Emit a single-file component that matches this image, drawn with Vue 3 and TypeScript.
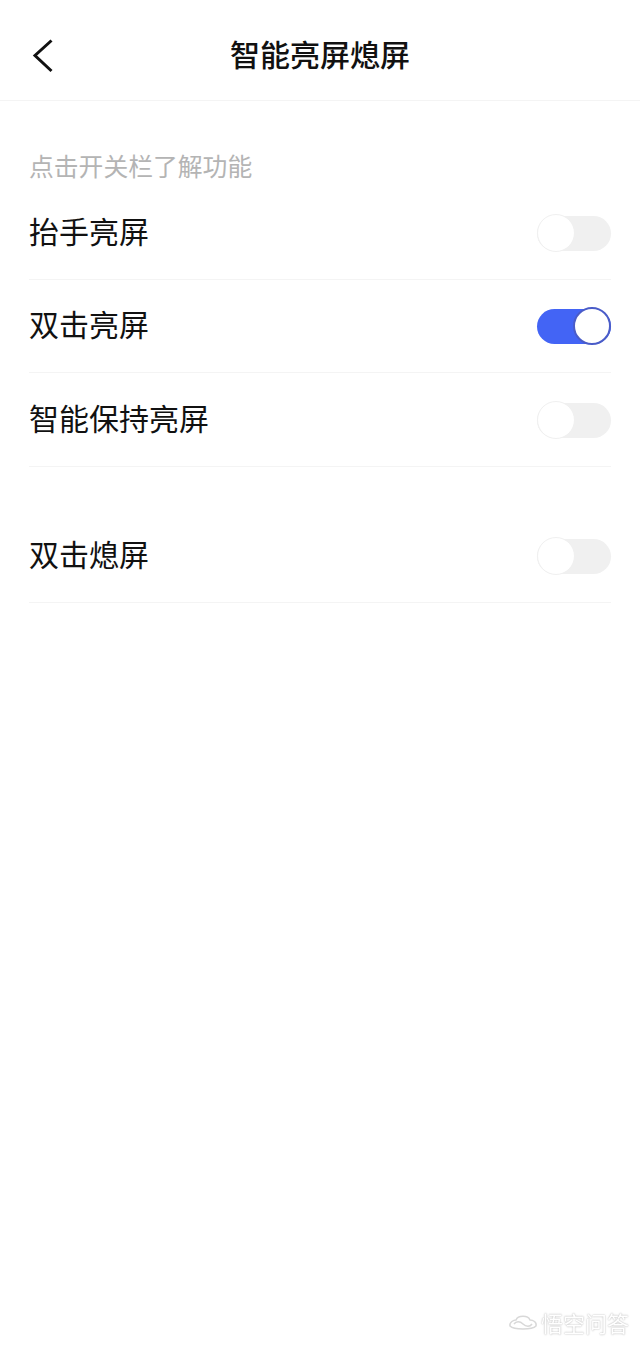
<template>
  <div class="page">
    <header class="nav">
      <svg class="back" width="24" height="36" viewBox="0 0 24 36">
        <path d="M21.500 2.500 L5 17.500 L21.500 33" fill="none" stroke="#111" stroke-width="3" />
      </svg>
      <h1 class="title">智能亮屏熄屏</h1>
    </header>

    <div class="hint">点击开关栏了解功能</div>

    <section v-for="(group, i) in groups" :key="i" class="group">
      <div v-for="item in group" :key="item.label" class="row">
        <span class="label">{{ item.label }}</span>
        <span class="switch" :class="{ on: item.on }"><i class="thumb"></i></span>
      </div>
    </section>

    <div class="watermark">
      <svg width="30" height="20" viewBox="0 0 30 20">
        <path d="M2 14 C1 10 6 8 8 8 C10 3 20 3 22 8 C25 8 29 10 28 14 C24 18 6 18 2 14 Z" fill="#fff" stroke="#d8d8d8" stroke-width="1.500" />
        <path d="M6 12 C8 9 12 9 15 12 C18 15 22 15 24 12" fill="none" stroke="#d8d8d8" stroke-width="1.500" />
      </svg>
      <span>悟空问答</span>
    </div>
  </div>
</template>

<script setup lang="ts">
interface Item {
  label: string
  on: boolean
}

const groups: Item[][] = [
  [
    { label: '抬手亮屏', on: false },
    { label: '双击亮屏', on: true },
    { label: '智能保持亮屏', on: false },
  ],
  [{ label: '双击熄屏', on: false }],
]
</script>

<style>
html, body { background: #fff; }
</style>

<style scoped>
.page {
  position: relative;
  height: 1345px;
  overflow: hidden;
  background: #fff;
  color: #111;
  font-family: "Noto Sans CJK SC", "Noto Sans", sans-serif;
}
.nav {
  height: 101px;
  display: flex;
  align-items: center;
  justify-content: center;
  border-bottom: 1px solid #f4f4f4;
  box-sizing: border-box;
  padding-top: 5px;
  position: relative;
}
.back { position: absolute; left: 30px; top: 38px; }
.title { margin: 0; font-size: 30px; line-height: 40px; font-weight: 500; }
.hint {
  margin: 48px 0 5px 29px;
  font-size: 24.800px;
  line-height: 32px;
  color: #b4b4b4;
}
.group { padding: 0 29px; }
.group + .group { margin-top: 43px; }
.row {
  height: 93.500px;
  display: flex;
  align-items: center;
  justify-content: space-between;
  border-bottom: 1px solid #f4f4f4;
  box-sizing: border-box;
}
.label { font-size: 30px; line-height: 40px; margin-top: -5px; }
.switch {
  position: relative;
  width: 74px;
  height: 35px;
  margin-top: 2px;
  border-radius: 18px;
  background: #f0f0f0;
  display: block;
}
.thumb {
  position: absolute;
  left: 0;
  top: -2px;
  width: 38px;
  height: 38px;
  box-sizing: border-box;
  border-radius: 50%;
  background: #fff;
  border: 1.500px solid #f0f0f0;
}
.switch.on { background: #4364f5; }
.switch.on .thumb { left: 36px; border: 2px solid #4a5cc8; }
.watermark {
  position: absolute;
  right: 11px;
  bottom: 8px;
  display: flex;
  align-items: center;
  gap: 3px;
  font-size: 22px;
  line-height: 30px;
  color: #fff;
  text-shadow: 0 0 2px #bcbcbc, 0 0 1px #cccccc;
  filter: blur(0.5px);
}
</style>
